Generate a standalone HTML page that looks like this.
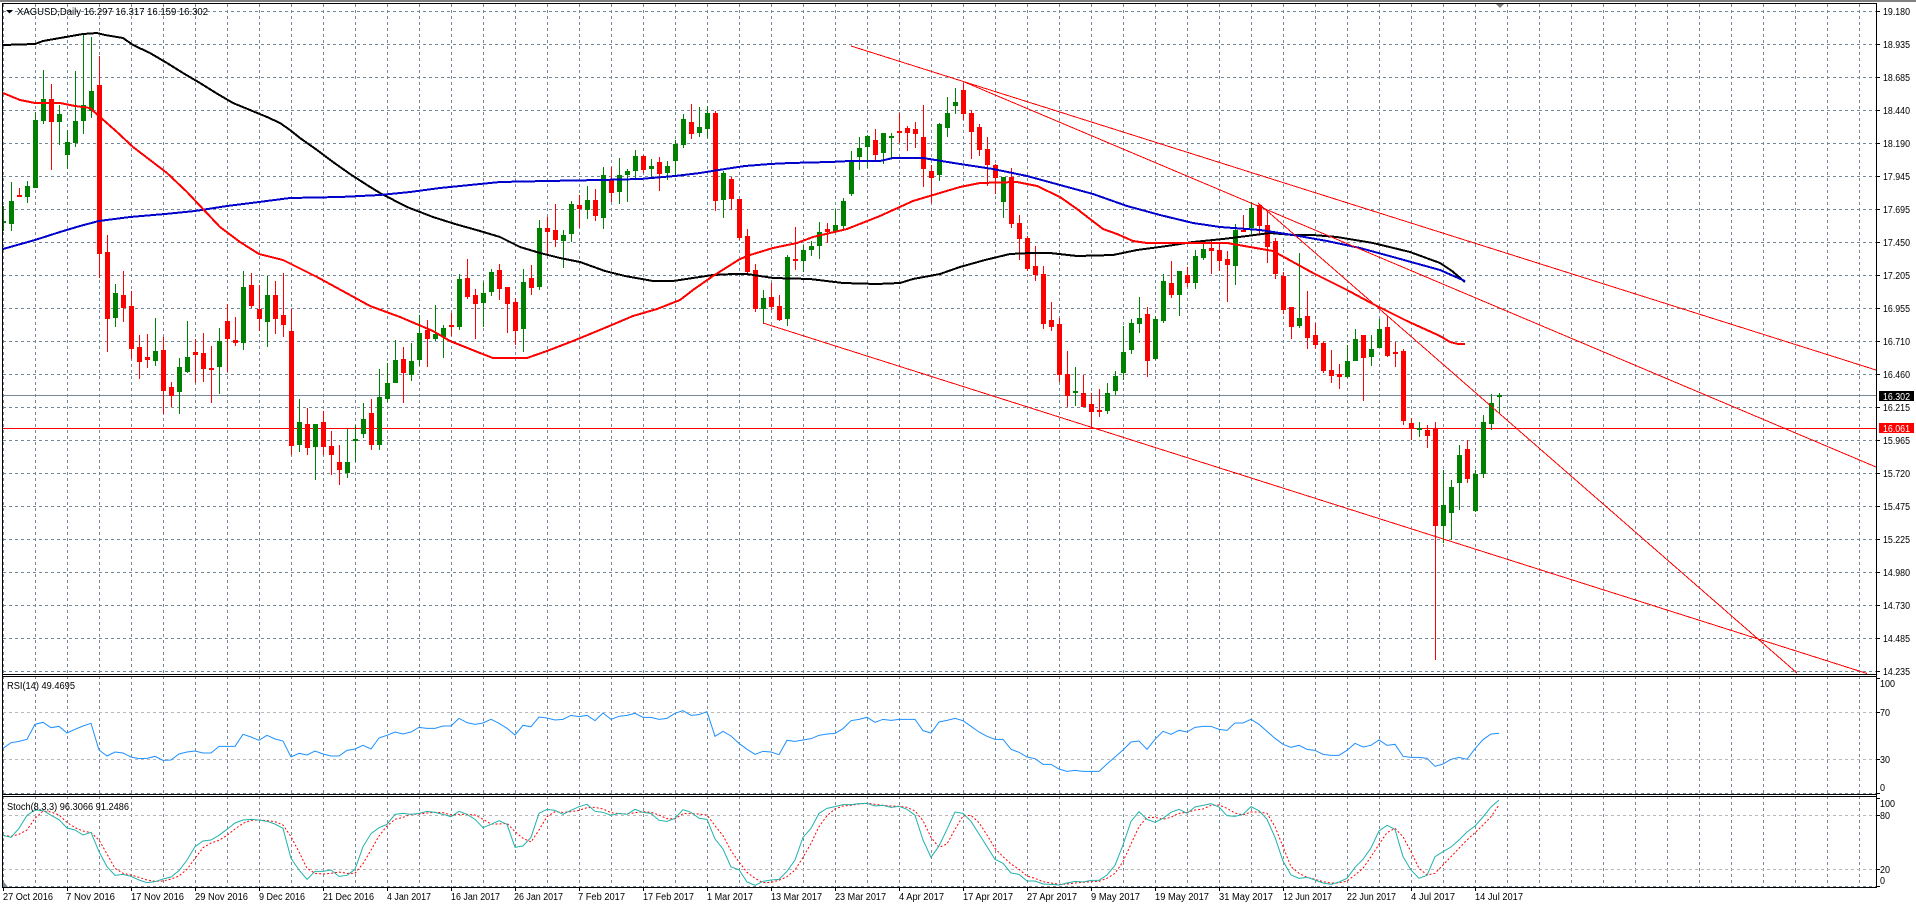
<!DOCTYPE html>
<html><head><meta charset="utf-8"><title>XAGUSD,Daily</title>
<style>
html,body{margin:0;padding:0;background:#fff;width:1916px;height:905px;overflow:hidden}
svg{display:block}
text{font-family:"Liberation Sans",sans-serif;font-size:10px;fill:#000}
</style></head><body>
<svg xmlns="http://www.w3.org/2000/svg" width="1916" height="905" viewBox="0 0 1916 905">
<defs><clipPath id="c"><rect x="3" y="4" width="1873" height="670"/></clipPath></defs>
<rect width="1916" height="905" fill="#fff"/>
<rect width="1916" height="2" fill="#808080"/>

<!-- vertical grid -->
<path shape-rendering="crispEdges" fill="none" stroke="#778899" stroke-dasharray="3 3" d="M3.5 4V887M35.5 4V887M67.5 4V887M99.5 4V887M131.5 4V887M163.5 4V887M195.5 4V887M227.5 4V887M259.5 4V887M291.5 4V887M323.5 4V887M355.5 4V887M387.5 4V887M419.5 4V887M451.5 4V887M483.5 4V887M515.5 4V887M547.5 4V887M579.5 4V887M611.5 4V887M643.5 4V887M675.5 4V887M707.5 4V887M739.5 4V887M771.5 4V887M803.5 4V887M835.5 4V887M867.5 4V887M899.5 4V887M931.5 4V887M963.5 4V887M995.5 4V887M1027.5 4V887M1059.5 4V887M1091.5 4V887M1123.5 4V887M1155.5 4V887M1187.5 4V887M1219.5 4V887M1251.5 4V887M1283.5 4V887M1315.5 4V887M1347.5 4V887M1379.5 4V887M1411.5 4V887M1443.5 4V887M1475.5 4V887M1507.5 4V887M1539.5 4V887M1571.5 4V887M1603.5 4V887M1635.5 4V887M1667.5 4V887M1699.5 4V887M1731.5 4V887M1763.5 4V887M1795.5 4V887M1827.5 4V887M1859.5 4V887"/>
<!-- horizontal grid -->
<path shape-rendering="crispEdges" fill="none" stroke="#778899" stroke-dasharray="3 3" d="M3 11.5H1876M3 44.5H1876M3 77.5H1876M3 110.5H1876M3 143.5H1876M3 176.5H1876M3 209.5H1876M3 242.5H1876M3 275.5H1876M3 308.5H1876M3 341.5H1876M3 374.5H1876M3 407.5H1876M3 440.5H1876M3 473.5H1876M3 506.5H1876M3 539.5H1876M3 572.5H1876M3 605.5H1876M3 638.5H1876M3 671.5H1876M3 793.5H1876M3 886.5H1876"/>
<path shape-rendering="crispEdges" fill="none" stroke="#b8b8b8" stroke-dasharray="3 3" d="M3 712.5H1876M3 759.5H1876M3 815.5H1876M3 869.5H1876"/>

<g clip-path="url(#c)" shape-rendering="crispEdges" fill="none">
<!-- horizontal levels -->
<path stroke="#778899" d="M3 395.5H1876"/>
<path stroke="#ff0000" d="M3 428.5H1876"/>
<!-- green wicks -->
<path stroke="#008000" d="M3.5 206V231M11.5 182V231M27.5 181V203M35.5 112V188M43.5 70V124M59.5 105V145M67.5 130V169M75.5 71V147M83.5 35V134M91.5 37V118M115.5 284V327M155.5 318V366M179.5 358V414M187.5 321V373M219.5 328V394M243.5 271V350M267.5 276V347M299.5 399V452M315.5 424V480M347.5 429V478M355.5 425V462M363.5 403V438M379.5 369V450M387.5 363V402M395.5 340V383M411.5 343V381M419.5 315V366M435.5 305V341M443.5 325V358M459.5 274V330M483.5 282V327M491.5 269V296M523.5 269V352M539.5 220V290M563.5 230V268M571.5 201V242M587.5 186V219M603.5 167V229M619.5 158V204M627.5 169V202M635.5 150V180M651.5 159V179M667.5 161V180M675.5 140V175M683.5 114V148M699.5 107V137M707.5 106V138M723.5 171V218M763.5 290V324M787.5 255V326M803.5 245V272M811.5 241V256M819.5 222V259M835.5 209V233M843.5 198V231M851.5 151V196M859.5 137V170M867.5 135V168M883.5 133V164M891.5 133V158M939.5 123V181M947.5 97V137M955.5 88V114M1003.5 177V218M1075.5 367V406M1107.5 383V414M1115.5 371V395M1123.5 326V380M1131.5 319V354M1139.5 297V333M1155.5 316V360M1163.5 274V323M1179.5 271V316M1195.5 250V289M1203.5 240V260M1235.5 224V285M1251.5 202V234M1299.5 253V328M1347.5 345V378M1355.5 329V361M1371.5 335V366M1379.5 319V348M1419.5 422V437M1443.5 470V543M1451.5 480V540M1459.5 445V510M1475.5 470V512M1483.5 415V478M1491.5 394V430M1499.5 393V414"/>
<!-- green bodies -->
<path stroke="#008000" stroke-width="5" d="M3.5 221V223M11.5 201V224M27.5 186V197M35.5 120V188M43.5 99V121M59.5 114V122M67.5 142V155M75.5 121V143M83.5 105V121M91.5 91V111M115.5 293V318M155.5 351V361M179.5 367V392M187.5 357V372M219.5 341V367M243.5 287V343M267.5 295V322M299.5 422V445M315.5 424V447M347.5 462V473M355.5 439V441M363.5 419V434M379.5 397V445M387.5 383V399M395.5 360V383M411.5 361V375M419.5 333V360M435.5 334V339M443.5 328V337M459.5 279V327M483.5 293V303M491.5 272V292M523.5 282V329M539.5 228V287M563.5 235V241M571.5 204V234M587.5 200V210M603.5 175V218M619.5 175V192M627.5 171V175M635.5 156V171M651.5 166V169M667.5 166V173M675.5 144V161M683.5 119V145M699.5 127V133M707.5 113V129M723.5 173V200M763.5 298V309M787.5 257V319M803.5 250V261M811.5 246V250M819.5 232V246M835.5 225V232M843.5 201V226M851.5 162V194M859.5 148V157M867.5 136V147M883.5 133V153M891.5 136V138M939.5 124V175M947.5 113V128M955.5 102V106M1003.5 177V202M1075.5 391V393M1107.5 393V411M1115.5 376V391M1123.5 352V373M1131.5 323V350M1139.5 318V324M1155.5 319V359M1163.5 281V321M1179.5 271V295M1195.5 256V283M1203.5 249V258M1235.5 230V266M1251.5 208V228M1299.5 318V326M1347.5 361V377M1355.5 339V361M1371.5 349V357M1379.5 329V348M1419.5 428V430M1443.5 505V526M1451.5 487V513M1459.5 455V483M1475.5 474V511M1483.5 422V474M1491.5 403V424M1499.5 395V397"/>
<!-- red wicks -->
<path stroke="#ff0000" d="M19.5 188V197M51.5 84V170M99.5 56V278M107.5 235V352M123.5 271V322M131.5 291V359M139.5 335V379M147.5 334V368M163.5 337V414M171.5 382V407M195.5 339V383M203.5 333V382M211.5 346V403M227.5 304V372M235.5 317V346M251.5 273V308M259.5 285V331M275.5 281V334M283.5 273V337M291.5 309V455M307.5 408V455M323.5 411V455M331.5 431V475M339.5 445V485M371.5 399V450M403.5 347V403M427.5 320V367M451.5 313V336M467.5 259V299M475.5 289V339M499.5 264V300M507.5 287V333M515.5 298V345M531.5 265V295M547.5 217V256M555.5 204V247M579.5 195V228M595.5 189V221M611.5 167V202M643.5 155V173M659.5 157V191M691.5 104V139M715.5 111V211M731.5 177V210M739.5 199V240M747.5 229V273M755.5 264V312M771.5 283V310M779.5 295V321M795.5 227V270M827.5 223V243M875.5 129V161M899.5 113V143M907.5 126V151M915.5 122V148M923.5 105V187M931.5 165V203M963.5 83V120M971.5 110V159M979.5 124V156M987.5 137V186M995.5 164V194M1011.5 168V228M1019.5 215V260M1027.5 236V271M1035.5 246V281M1043.5 266V329M1051.5 302V331M1059.5 318V382M1067.5 351V407M1083.5 375V407M1091.5 393V428M1099.5 389V417M1147.5 307V377M1171.5 261V298M1187.5 267V287M1211.5 240V274M1219.5 244V271M1227.5 251V302M1243.5 215V232M1259.5 204V234M1267.5 211V263M1275.5 238V279M1283.5 272V314M1291.5 307V339M1307.5 291V349M1315.5 323V349M1323.5 341V373M1331.5 350V383M1339.5 364V389M1363.5 335V401M1387.5 316V357M1395.5 342V367M1403.5 349V425M1411.5 418V440M1427.5 425V448M1435.5 422V660M1467.5 440V483"/>
<!-- red bodies -->
<path stroke="#ff0000" stroke-width="5" d="M19.5 195V197M51.5 99V122M99.5 85V254M107.5 252V319M123.5 295V308M131.5 306V349M139.5 347V362M147.5 357V360M163.5 350V391M171.5 387V396M195.5 352V355M203.5 353V369M211.5 368V370M227.5 321V339M235.5 340V343M251.5 285V306M259.5 309V319M275.5 295V319M283.5 315V325M291.5 331V446M307.5 424V448M323.5 422V447M331.5 446V455M339.5 462V470M371.5 413V445M403.5 359V373M427.5 330V339M451.5 325V327M467.5 278V297M475.5 295V304M499.5 270V289M507.5 287V304M515.5 302V331M531.5 278V288M547.5 228V232M555.5 230V240M579.5 205V209M595.5 200V216M611.5 179V193M643.5 156V170M659.5 162V174M691.5 122V134M715.5 113V201M731.5 179V199M739.5 199V238M747.5 236V272M755.5 270V309M771.5 297V307M779.5 306V320M795.5 259V261M827.5 229V232M875.5 140V155M899.5 131V133M907.5 128V133M915.5 129V134M923.5 137V169M931.5 171V178M963.5 90V114M971.5 113V132M979.5 127V150M987.5 149V165M995.5 165V178M1011.5 177V224M1019.5 223V239M1027.5 238V269M1035.5 266V275M1043.5 274V324M1051.5 320V327M1059.5 324V375M1067.5 374V396M1083.5 393V407M1091.5 404V412M1099.5 410V412M1147.5 314V361M1171.5 283V295M1187.5 275V283M1211.5 248V251M1219.5 250V261M1227.5 259V265M1243.5 230V232M1259.5 205V226M1267.5 225V247M1275.5 241V274M1283.5 276V310M1291.5 307V327M1307.5 316V338M1315.5 335V345M1323.5 343V371M1331.5 370V376M1339.5 374V377M1363.5 335V358M1387.5 327V356M1395.5 352V354M1403.5 351V421M1411.5 423V429M1427.5 430V436M1435.5 428V526M1467.5 449V479"/>

<!-- moving averages -->
<polyline stroke="#000" stroke-width="2" points="3,45 35,44 43,41 60,38 83,34 97,33 105,35 123,38 133,45 150,53 167,63 183,73 200,83 216,93 233,103 250,110 267,117 280,123 290,130 300,138 317,150 333,162 350,174 367,185 380,193 407,207 433,217 455,224 480,231 500,237 520,247 540,253 560,258 580,262 605,271 625,276 653,281 673,281 693,278 713,275 733,274 747,274 773,278 810,279 843,283 877,284 900,283 913,279 940,274 960,267 985,260 1010,254 1030,253 1050,253 1077,256 1113,255 1137,250 1167,246 1193,242 1223,239 1247,236 1270,233 1293,235 1313,235 1337,237 1373,243 1410,252 1440,263 1452,271 1465,282"/>
<polyline stroke="#0000cd" stroke-width="2" points="3,249 35,240 60,232 80,226 99,221 130,217 165,214 195,211 227,206 259,202 290,198 340,197 380,195 410,192 440,188 480,184 500,182 547,181 600,180 640,179 675,176 700,173 725,169 745,166 770,164 790,163 830,162 850,161 880,161 893,158 923,158 960,164 993,169 1027,176 1060,185 1093,194 1127,206 1160,215 1193,223 1220,227 1260,230 1293,235 1327,241 1360,248 1393,257 1440,270 1465,281"/>
<polyline stroke="#ff0000" stroke-width="2" points="3,93 20,100 35,103 60,103 75,106 90,108 100,117 117,132 133,147 150,160 167,173 187,192 203,209 220,227 240,242 259,254 283,260 317,277 350,295 370,306 400,317 433,331 450,341 480,353 493,358 527,358 547,351 573,341 607,327 633,316 657,309 680,300 693,290 713,276 740,259 750,255 773,248 797,243 813,237 847,229 880,216 913,201 960,187 980,183 1017,182 1037,186 1060,197 1077,209 1103,229 1117,234 1133,241 1147,243 1227,243 1273,251 1313,273 1347,290 1373,304 1407,321 1440,336 1450,342 1458,344 1465,344"/>

<!-- trend lines -->
<path stroke="#ff0000" d="M851 46L1876 370M962 81L1876 467M1258 203L1797 673M763 323L1867 673.5"/>
</g>

<!-- RSI -->
<g transform="translate(0 660) scale(1 .33333)" fill="none">
<polyline vector-effect="non-scaling-stroke" stroke="#1e90ff" stroke-width="1" points="3,265 11,248 19,244 27,238 35,193 43,187 51,203 59,199 67,219 75,208 83,198 91,190 99,270 107,288 115,276 123,279 131,291 139,296 147,295 155,289 163,301 171,300 179,282 187,276 195,273 203,279 211,279 219,259 227,259 235,259 243,223 251,231 259,241 267,226 275,237 283,243 291,291 299,280 307,285 315,273 323,282 331,288 339,288 347,271 355,267 363,256 371,267 379,234 387,226 395,216 403,222 411,216 419,202 427,205 435,205 443,198 451,198 459,175 467,188 475,193 483,189 491,178 499,190 507,205 515,225 523,196 531,200 539,171 547,174 555,180 563,178 571,166 579,170 587,166 595,182 603,159 611,178 619,169 627,166 635,160 643,172 651,172 659,178 667,175 675,160 683,152 691,166 699,164 707,155 715,229 723,214 731,228 739,250 747,268 755,283 763,274 771,276 779,284 787,241 795,244 803,240 811,236 819,226 827,222 835,220 843,206 851,182 859,178 867,172 875,187 883,178 891,181 899,178 907,178 915,178 923,212 931,219 939,186 947,181 955,175 963,182 971,199 979,216 987,229 995,238 1003,238 1011,268 1019,277 1027,291 1035,296 1043,313 1051,313 1059,327 1067,334 1075,331 1083,334 1091,334 1099,334 1107,312 1115,291 1123,270 1131,246 1139,243 1147,268 1155,238 1163,214 1171,223 1179,211 1187,216 1195,202 1203,199 1211,199 1219,208 1227,211 1235,189 1243,189 1251,178 1259,193 1267,214 1275,235 1283,253 1291,262 1299,256 1307,268 1315,271 1323,283 1331,286 1339,286 1347,271 1355,250 1363,261 1371,256 1379,240 1387,256 1395,253 1403,289 1411,292 1419,292 1427,295 1435,319 1443,312 1451,298 1459,292 1467,298 1475,266 1483,239 1491,222 1499,220"/>
<!-- Stoch signal -->
<polyline vector-effect="non-scaling-stroke" stroke="#ff0000" stroke-width="1" stroke-dasharray="2 2" points="3,526 11,529 19,523 27,510 35,475 43,453 51,456 59,465 67,487 75,503 83,513 91,518 99,540 107,582 115,625 123,640 131,645 139,652 147,660 155,664 163,663 171,657 179,648 187,628 195,595 203,563 211,549 219,541 227,526 235,507 243,490 251,481 259,480 267,482 275,485 283,495 291,530 299,576 307,625 315,640 323,642 331,640 339,636 347,640 355,640 363,611 371,570 379,528 387,498 395,478 403,472 411,463 419,462 427,459 435,457 443,458 451,465 459,463 467,463 475,465 483,478 491,492 499,492 507,490 515,515 523,535 531,546 539,510 547,470 555,455 563,457 571,455 579,451 587,443 595,442 603,447 611,458 619,461 627,462 635,458 643,455 651,457 659,465 667,476 675,477 683,461 691,461 699,462 707,465 715,497 723,527 731,572 739,606 747,637 755,655 763,668 771,667 779,661 787,650 795,630 803,592 811,550 819,500 827,467 835,447 843,438 851,436 859,432 867,430 875,433 883,436 891,438 899,439 907,442 915,453 923,482 931,532 939,562 947,552 955,508 963,468 971,466 979,488 987,525 995,565 1003,590 1011,612 1019,628 1027,648 1035,655 1043,665 1051,669 1059,673 1067,672 1075,669 1083,667 1091,665 1099,664 1107,655 1115,640 1123,605 1131,552 1139,500 1147,472 1155,472 1163,478 1171,472 1179,460 1187,457 1195,450 1203,447 1211,436 1219,435 1227,445 1235,459 1243,465 1251,456 1259,456 1267,460 1275,500 1283,560 1291,620 1299,640 1307,652 1315,658 1323,665 1331,669 1339,669 1347,663 1355,645 1363,625 1371,590 1379,553 1387,518 1395,505 1403,530 1411,575 1419,625 1427,645 1435,640 1443,615 1451,590 1459,565 1467,540 1475,518 1483,495 1491,470 1499,435"/>
<!-- Stoch main -->
<polyline vector-effect="non-scaling-stroke" stroke="#20b2aa" stroke-width="1" points="3,526 11,532 19,505 27,466 35,450 43,451 51,466 59,479 67,504 75,510 83,525 91,517 99,575 107,620 115,646 123,643 131,649 139,660 147,668 155,665 163,657 171,651 179,632 187,600 195,560 203,543 211,540 219,526 227,508 235,489 243,480 251,478 259,480 267,484 275,492 283,505 291,595 299,630 307,658 315,634 323,634 331,630 339,649 347,646 355,628 363,560 371,521 379,503 387,493 395,463 403,460 411,463 419,460 427,454 435,457 443,463 451,470 459,454 467,463 475,478 483,503 491,493 499,482 507,493 515,562 523,558 531,532 539,460 547,448 555,451 563,463 571,451 579,440 587,433 595,454 603,457 611,466 619,460 627,463 635,448 643,457 651,460 659,481 667,484 675,475 683,449 691,457 699,475 707,478 715,537 723,567 731,621 739,629 747,666 755,676 763,664 771,660 779,658 787,634 795,600 803,532 811,505 819,460 827,445 835,440 843,434 851,434 859,431 867,430 875,438 883,436 891,442 899,439 907,448 915,466 923,540 931,592 939,558 947,508 955,456 963,460 971,484 979,522 987,560 995,598 1003,610 1011,639 1019,643 1027,663 1035,663 1043,672 1051,673 1059,675 1067,669 1075,664 1083,666 1091,661 1099,661 1107,645 1115,616 1123,555 1131,484 1139,455 1147,478 1155,487 1163,475 1171,457 1179,448 1187,460 1195,441 1203,436 1211,431 1219,441 1227,467 1235,469 1243,463 1251,440 1259,452 1267,478 1275,532 1283,603 1291,645 1299,655 1307,652 1315,660 1323,669 1331,673 1339,666 1347,655 1355,622 1363,598 1371,564 1379,513 1387,496 1395,508 1403,590 1411,630 1419,655 1427,646 1435,590 1443,575 1451,561 1459,540 1467,516 1475,498 1483,471 1491,441 1499,420"/>
</g>

<!-- frame -->
<path shape-rendering="crispEdges" fill="none" stroke="#000" d="M2.5 3.5H1876.5V887.5H2.5ZM2 674.5H1877M2 676.5H1877M2 794.5H1877M2 796.5H1877"/>
<!-- right ticks -->
<path shape-rendering="crispEdges" fill="none" stroke="#000" d="M1877 11.5h3M1877 44.5h3M1877 77.5h3M1877 110.5h3M1877 143.5h3M1877 176.5h3M1877 209.5h3M1877 242.5h3M1877 275.5h3M1877 308.5h3M1877 341.5h3M1877 374.5h3M1877 407.5h3M1877 440.5h3M1877 473.5h3M1877 506.5h3M1877 539.5h3M1877 572.5h3M1877 605.5h3M1877 638.5h3M1877 671.5h3M1877 678.5h3M1877 712.5h3M1877 759.5h3M1877 793.5h3M1877 798.5h3M1877 815.5h3M1877 869.5h3M1877 886.5h3"/>
<!-- bottom ticks -->
<path shape-rendering="crispEdges" fill="none" stroke="#000" d="M3.5 888v3M67.5 888v3M131.5 888v3M195.5 888v3M259.5 888v3M323.5 888v3M387.5 888v3M451.5 888v3M515.5 888v3M579.5 888v3M643.5 888v3M707.5 888v3M771.5 888v3M835.5 888v3M899.5 888v3M963.5 888v3M1027.5 888v3M1091.5 888v3M1155.5 888v3M1219.5 888v3M1283.5 888v3M1347.5 888v3M1411.5 888v3M1475.5 888v3"/>

<!-- small markers -->
<polygon points="6,10 13,10 9.5,13.5" fill="#000"/>
<polygon points="1496,4 1504,4 1500,8" fill="#808080"/>
<polygon points="3,887 8,887 3,881" fill="#778899"/>

<!-- headings -->
<text x="17" y="15" textLength="191" lengthAdjust="spacingAndGlyphs">XAGUSD,Daily  16.297 16.317 16.159 16.302</text>
<text x="7" y="689" textLength="68" lengthAdjust="spacingAndGlyphs">RSI(14) 49.4695</text>
<text x="7" y="810" textLength="122" lengthAdjust="spacingAndGlyphs">Stoch(8,3,3) 96.3066 91.2486</text>

<!-- price axis -->
<g>
<text x="1883" y="15" textLength="27" lengthAdjust="spacingAndGlyphs">19.180</text>
<text x="1883" y="48" textLength="27" lengthAdjust="spacingAndGlyphs">18.935</text>
<text x="1883" y="81" textLength="27" lengthAdjust="spacingAndGlyphs">18.685</text>
<text x="1883" y="114" textLength="27" lengthAdjust="spacingAndGlyphs">18.440</text>
<text x="1883" y="147" textLength="27" lengthAdjust="spacingAndGlyphs">18.190</text>
<text x="1883" y="180" textLength="27" lengthAdjust="spacingAndGlyphs">17.945</text>
<text x="1883" y="213" textLength="27" lengthAdjust="spacingAndGlyphs">17.695</text>
<text x="1883" y="246" textLength="27" lengthAdjust="spacingAndGlyphs">17.450</text>
<text x="1883" y="279" textLength="27" lengthAdjust="spacingAndGlyphs">17.205</text>
<text x="1883" y="312" textLength="27" lengthAdjust="spacingAndGlyphs">16.955</text>
<text x="1883" y="345" textLength="27" lengthAdjust="spacingAndGlyphs">16.710</text>
<text x="1883" y="378" textLength="27" lengthAdjust="spacingAndGlyphs">16.460</text>
<text x="1883" y="411" textLength="27" lengthAdjust="spacingAndGlyphs">16.215</text>
<text x="1883" y="444" textLength="27" lengthAdjust="spacingAndGlyphs">15.965</text>
<text x="1883" y="477" textLength="27" lengthAdjust="spacingAndGlyphs">15.720</text>
<text x="1883" y="510" textLength="27" lengthAdjust="spacingAndGlyphs">15.475</text>
<text x="1883" y="543" textLength="27" lengthAdjust="spacingAndGlyphs">15.225</text>
<text x="1883" y="576" textLength="27" lengthAdjust="spacingAndGlyphs">14.980</text>
<text x="1883" y="609" textLength="27" lengthAdjust="spacingAndGlyphs">14.730</text>
<text x="1883" y="642" textLength="27" lengthAdjust="spacingAndGlyphs">14.485</text>
<text x="1883" y="675" textLength="27" lengthAdjust="spacingAndGlyphs">14.235</text>
<rect x="1879" y="391" width="35" height="10" fill="#000"/>
<text x="1883" y="400" textLength="27" lengthAdjust="spacingAndGlyphs" style="fill:#fff">16.302</text>
<rect x="1879" y="423" width="35" height="10" fill="#ff0000"/>
<text x="1883" y="432" textLength="27" lengthAdjust="spacingAndGlyphs" style="fill:#fff">16.061</text>
<text x="1880" y="687" textLength="15" lengthAdjust="spacingAndGlyphs">100</text>
<text x="1880" y="716" textLength="10" lengthAdjust="spacingAndGlyphs">70</text>
<text x="1880" y="763" textLength="10" lengthAdjust="spacingAndGlyphs">30</text>
<text x="1880" y="791" textLength="5" lengthAdjust="spacingAndGlyphs">0</text>
<text x="1880" y="807" textLength="15" lengthAdjust="spacingAndGlyphs">100</text>
<text x="1880" y="819" textLength="10" lengthAdjust="spacingAndGlyphs">80</text>
<text x="1880" y="873" textLength="10" lengthAdjust="spacingAndGlyphs">20</text>
<text x="1880" y="884" textLength="5" lengthAdjust="spacingAndGlyphs">0</text>
</g>

<!-- date axis -->
<g>
<text x="3" y="900" textLength="50" lengthAdjust="spacingAndGlyphs">27 Oct 2016</text>
<text x="66" y="900" textLength="49" lengthAdjust="spacingAndGlyphs">7 Nov 2016</text>
<text x="131" y="900" textLength="53" lengthAdjust="spacingAndGlyphs">17 Nov 2016</text>
<text x="195" y="900" textLength="53" lengthAdjust="spacingAndGlyphs">29 Nov 2016</text>
<text x="259" y="900" textLength="46" lengthAdjust="spacingAndGlyphs">9 Dec 2016</text>
<text x="323" y="900" textLength="51" lengthAdjust="spacingAndGlyphs">21 Dec 2016</text>
<text x="387" y="900" textLength="44" lengthAdjust="spacingAndGlyphs">4 Jan 2017</text>
<text x="451" y="900" textLength="49" lengthAdjust="spacingAndGlyphs">16 Jan 2017</text>
<text x="514" y="900" textLength="49" lengthAdjust="spacingAndGlyphs">26 Jan 2017</text>
<text x="578" y="900" textLength="47" lengthAdjust="spacingAndGlyphs">7 Feb 2017</text>
<text x="643" y="900" textLength="51" lengthAdjust="spacingAndGlyphs">17 Feb 2017</text>
<text x="707" y="900" textLength="46" lengthAdjust="spacingAndGlyphs">1 Mar 2017</text>
<text x="771" y="900" textLength="51" lengthAdjust="spacingAndGlyphs">13 Mar 2017</text>
<text x="835" y="900" textLength="51" lengthAdjust="spacingAndGlyphs">23 Mar 2017</text>
<text x="899" y="900" textLength="45" lengthAdjust="spacingAndGlyphs">4 Apr 2017</text>
<text x="963" y="900" textLength="50" lengthAdjust="spacingAndGlyphs">17 Apr 2017</text>
<text x="1027" y="900" textLength="50" lengthAdjust="spacingAndGlyphs">27 Apr 2017</text>
<text x="1091" y="900" textLength="49" lengthAdjust="spacingAndGlyphs">9 May 2017</text>
<text x="1155" y="900" textLength="54" lengthAdjust="spacingAndGlyphs">19 May 2017</text>
<text x="1219" y="900" textLength="54" lengthAdjust="spacingAndGlyphs">31 May 2017</text>
<text x="1283" y="900" textLength="49" lengthAdjust="spacingAndGlyphs">12 Jun 2017</text>
<text x="1347" y="900" textLength="49" lengthAdjust="spacingAndGlyphs">22 Jun 2017</text>
<text x="1411" y="900" textLength="44" lengthAdjust="spacingAndGlyphs">4 Jul 2017</text>
<text x="1475" y="900" textLength="48" lengthAdjust="spacingAndGlyphs">14 Jul 2017</text>
</g>
</svg>
</body></html>
